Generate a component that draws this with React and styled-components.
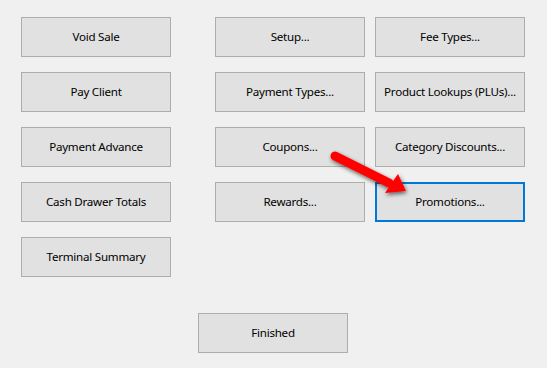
import React from "react";
import styled, { createGlobalStyle } from "styled-components";

const Global = createGlobalStyle`
  html, body { margin: 0; padding: 0; background: #f0f0f0; }
  body { width: 547px; height: 368px; overflow: hidden; font-family: "Noto Sans", "Segoe UI", sans-serif; }
`;

const Page = styled.div`
  position: relative;
  width: 547px;
  height: 368px;
  box-sizing: border-box;
  padding: 17px 0 0 21px;
  display: flex;
  flex-direction: column;
`;

const Top = styled.div`
  display: flex;
  align-items: flex-start;
  gap: 44px;
`;

const Column = styled.div`
  display: flex;
  flex-direction: column;
  gap: 15px;
`;

const Grid = styled.div`
  display: grid;
  grid-template-columns: 150px 150px;
  column-gap: 10px;
  row-gap: 15px;
`;

const Footer = styled.div`
  display: flex;
  margin-top: 36px;
  padding-left: 177px;
`;

const Button = styled.button`
  box-sizing: border-box;
  width: 150px;
  height: 40px;
  margin: 0;
  padding: 0 0 1px;
  background: #e1e1e1;
  border: ${(p) => (p.$focused ? "2px solid #0078d7" : "1px solid #adadad")};
  font-family: "Noto Sans", "Segoe UI", sans-serif;
  font-size: 11.6px;
  color: #000;
  display: flex;
  align-items: center;
  justify-content: center;
  white-space: nowrap;
  letter-spacing: -0.25px;
  -webkit-font-smoothing: antialiased;
`;

const ArrowSvg = styled.svg`
  position: absolute;
  left: 0;
  top: 0;
  pointer-events: none;
`;

function Arrow() {
  return (
    <ArrowSvg width="547" height="368" viewBox="0 0 547 368">
      <defs>
        <filter id="sh" x="-30%" y="-30%" width="160%" height="160%">
          <feGaussianBlur in="SourceAlpha" stdDeviation="2" />
          <feOffset dx="1" dy="2" result="b" />
          <feComponentTransfer>
            <feFuncA type="linear" slope="0.6" />
          </feComponentTransfer>
          <feMerge>
            <feMergeNode />
            <feMergeNode in="SourceGraphic" />
          </feMerge>
        </filter>
      </defs>
      <g filter="url(#sh)" fill="#ff0000" stroke="none">
        <line x1="335" y1="156" x2="389" y2="183" stroke="#ff0000" strokeWidth="9" strokeLinecap="round" />
        <polygon points="398,174 385,193 406,191" />
      </g>
    </ArrowSvg>
  );
}

export default function App() {
  return (
    <>
      <Global />
      <Page>
        <Top>
          <Column>
            <Button>Void Sale</Button>
            <Button>Pay Client</Button>
            <Button>Payment Advance</Button>
            <Button>Cash Drawer Totals</Button>
            <Button>Terminal Summary</Button>
          </Column>
          <Grid>
            <Button>Setup...</Button>
            <Button>Fee Types...</Button>
            <Button>Payment Types...</Button>
            <Button>Product Lookups (PLUs)...</Button>
            <Button>Coupons...</Button>
            <Button>Category Discounts...</Button>
            <Button>Rewards...</Button>
            <Button $focused>Promotions...</Button>
          </Grid>
        </Top>
        <Footer>
          <Button>Finished</Button>
        </Footer>
        <Arrow />
      </Page>
    </>
  );
}
